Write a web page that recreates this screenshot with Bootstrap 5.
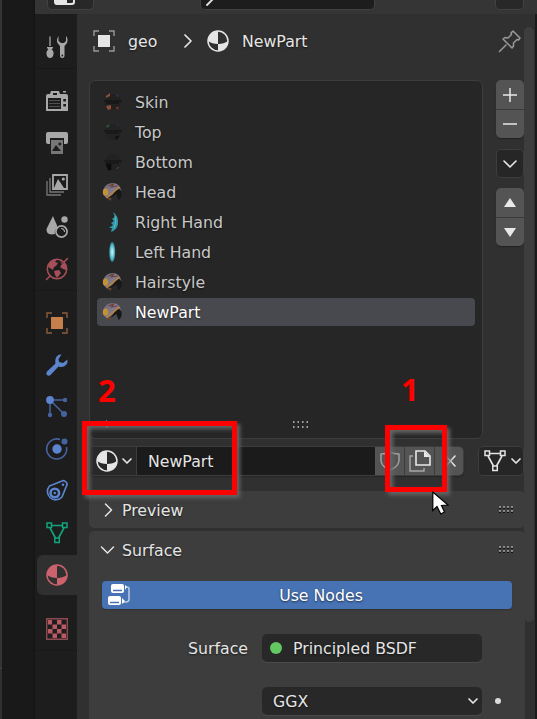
<!DOCTYPE html>
<html lang="en" data-bs-theme="dark">
<head>
<meta charset="utf-8">
<title>Material properties</title>
<link href="https://cdn.jsdelivr.net/npm/bootstrap@5.3.0/dist/css/bootstrap.min.css" rel="stylesheet">
<style>
body{font-family:"DejaVu Sans",sans-serif;font-size:15.75px;line-height:20px;color:#e5e5e5;background:#303030;width:537px;height:719px;text-shadow:0 1px 2px rgba(0,0,0,.6)}
svg{display:block;flex:none;overflow:visible}
.tx{padding-top:2px}
.ln{fill:none;stroke:currentColor;stroke-linecap:round;stroke-linejoin:round}
.edge{width:2px;background:#343434;height:669px;border-bottom:1px solid #444}
.gutter{width:33px;background:linear-gradient(90deg,#191919 30px,#151515)}
.topbar{height:14px;flex:none;background:#353535;padding-left:12px}
.topfield{height:10px;background:#282828;border:1px solid #414141;border-top:0;border-radius:0 0 5px 5px}
.tf1{width:47px}.tf2{width:175px;margin-left:106px;background:#1d1d1d}.tf3{width:29px;margin-left:120px}
.tabs{width:42px;background:#1d1d1d;padding-top:12px}
.tabset{border-bottom:1px solid #181818;margin-bottom:11px;color:#a8a8a8}
.tabset .nav-link{height:42px;padding:0 0 0 11px;color:inherit}
.tabset .nav-link.on{background:#303030;height:40px;margin:1px 0 1px 2px;padding-left:9px;border-radius:6px 0 0 6px;color:#cb626c}
.main{width:447px;padding-left:12px}
.crumb{height:54px;padding-left:4px;margin-bottom:12px}
.slots{width:394px;height:359px;background:#262626;border:1px solid #3d3d3d;border-radius:6px;padding:7px}
.slots .list-group{gap:2px}
.slots .list-group-item{height:28px;padding:0 5px;border:0;border-radius:4px;background:none;color:#c8c8c8;gap:12px}
.slots .list-group-item.on{background:#48494f;color:#fff}
.side{width:28px;gap:10px}
.sq{width:28px;height:29px;background:#545454;border:0;border-radius:0;padding:0;color:#e8e8e8;display:flex;align-items:center;justify-content:center}
.sq + .sq{border-left:1px solid #3d3d3d}
.pair{border-radius:5px;overflow:hidden;box-shadow:0 1px 1px #222}
.pair .sq + .sq{border-left:0;border-top:1px solid #3a3a3a}
.dark{background:#262626;border:1px solid #3d3d3d;border-radius:5px}
.idrow{height:30px;margin-top:7px}
.idbox{width:376px;height:30px;background:#1b1b1b;border:1px solid #3d3d3d;border-radius:5px;overflow:hidden;box-shadow:0 1px 1px #262626}
.idbox > *{flex:none}
.idtype{width:47px;background:#282828;border-right:1px solid #3d3d3d;padding-left:6px;gap:4px}
.idname{width:238px;padding-left:11px}
.idbox .sq{width:30px;height:28px}
.idbox .sq:last-child{padding-left:2px}
.linkbox{width:46px;height:30px;margin-left:14px;padding-left:5px;gap:5px}
.pane{width:436px;background:#3d3d3d;border-radius:5px}
.pane-head{height:37px;padding:0 11px 0 12px;gap:8px}
.use{height:28px;width:410px;margin:13px 0 0 13px;background:#4772b3;border-radius:4px;color:#fff;padding:0 0 0 6px;box-shadow:0 1px 1px #303030}
.prop{height:28px}
.prop .lab{width:159px}
.fld{width:220px;height:28px;margin-left:14px;background:#282828;border-radius:5px;padding:0 0 0 8px;box-shadow:0 1px 0 #4a4a4a}
.scrl{width:11px;padding-top:13px}
.thumbbar{width:10px;height:595px;background:#3d3d3d;border-radius:5px}
.rim{width:2px;background:#1b1b1b}
.mark-box{border:5px solid #f00;box-shadow:3px 3px 4px #666,inset 3px 3px 4px #666}
.m1{left:385px;top:425px;width:62px;height:67px}
.m2{left:82px;top:421px;width:155px;height:74px}
.num{font:700 31px/31px "Noto Sans",sans-serif;color:#f00;text-shadow:none}
.n1{left:401px;top:374px}.n2{left:98px;top:375px}
.ptr{left:432px;top:491px}
</style>
<script src="https://cdn.jsdelivr.net/npm/bootstrap@5.3.0/dist/js/bootstrap.bundle.min.js"></script>
</head>
<body class="position-relative overflow-hidden d-flex">
<svg width="0" height="0" class="position-absolute"><defs>
<linearGradient id="hg" x1="0" y1="0" x2="1" y2="1"><stop offset="0" stop-color="#686779"/><stop offset=".5" stop-color="#817c8c"/><stop offset="1" stop-color="#55414b"/></linearGradient>
<radialGradient id="lg"><stop offset="0" stop-color="#d4f6f9"/><stop offset=".5" stop-color="#7ccbd8"/><stop offset="1" stop-color="#258798"/></radialGradient>
<symbol id="ball" viewBox="0 0 22 22"><circle cx="11" cy="11" r="10" fill="none" stroke="currentColor" stroke-width="1.5"/><path d="M11 1A10 10 0 0 0 1 11Q5 14 11 14ZM11 14Q17 14 21 11A10 10 0 0 1 11 21Z" fill="currentColor"/></symbol>
<symbol id="helm" viewBox="0 0 20 20"><path d="M1 7Q4 0 12 1Q18 3 19 9L17 9L4 16L1 13Z" fill="url(#hg)"/><path d="M6 4L11 2L9 5L15 4" stroke="#743c38" stroke-width="1.200" fill="none"/><path d="M12 10Q17 4 19 10Q20 15 16 18L14 12L8 16Z" fill="#171717"/><path d="M4 16L17 5" stroke="#c18432" stroke-width="1.500"/><ellipse cx="3" cy="10" rx="2.7" ry="3.6" fill="#c39234"/><path d="M4 16L8 19L9 16" fill="#694630"/></symbol>
<symbol id="grip" viewBox="0 0 15 7"><path d="M0 1h2m2 0h2m2 0h2m2 0h2M0 5h2m2 0h2m2 0h2m2 0h2" stroke="#111" stroke-width="2" transform="translate(0 1)"/><path d="M0 1h2m2 0h2m2 0h2m2 0h2M0 5h2m2 0h2m2 0h2m2 0h2" stroke="#a8a8a8" stroke-width="1.500"/></symbol>
<symbol id="tri" viewBox="0 0 22 22"><path d="M5 3.5H17M4 6L9.5 16M18 6L12.5 16" fill="none" stroke="currentColor" stroke-width="1.6"/><path d="M1 1h4.5v4.5H1zM16.5 1H21v4.500h-4.500zM8.800 16h4.500v4.500H8.800z" fill="none" stroke="currentColor" stroke-width="1.500"/></symbol>
</defs></svg>

<div class="edge"></div>
<div class="gutter"></div>
<div class="flex-grow-1 d-flex flex-column">
 <header class="topbar d-flex">
  <div class="topfield tf1" style="padding-left:7px"><svg width="19" height="5" viewBox="0 0 19 5"><path d="M0-2V2Q0 5 3 5H18Q21 5 21 2V-2H19V2Q19 3 17 3H13V-2Z" fill="#e6e6e6" transform="translate(-1 0)"/></svg></div>
  <div class="topfield tf2"><svg width="14" height="6" viewBox="0 0 14 6"><path class="ln" d="M6 5L12-1" stroke-width="1.800"/></svg></div>
  <div class="topfield tf3"></div>
 </header>
 <div class="d-flex flex-grow-1">
  <nav class="tabs">
   <div class="tabset nav flex-column">
    <a class="nav-link d-flex align-items-center"><svg width="22" height="22" viewBox="0 0 22 22"><path d="M4 0.500V10" stroke="currentColor" stroke-width="1.300"/><path d="M1 11H7V12L5.500 13.500Q8 15 7.500 18Q7 22 4 22Q1 22 .5 18Q0 15 2.500 13.500L1 12Z" fill="currentColor"/><path d="M12.500 0Q10 4 11.500 7L14 10V20Q14 22 16.200 22Q18.500 22 18.500 20V10L21 7Q22.500 3 20 0V5L18 7H15L12.500 5Z" fill="currentColor"/><circle cx="16.300" cy="19.500" r=".9" fill="#1d1d1d"/></svg></a>
   </div>
   <div class="tabset nav flex-column">
    <a class="nav-link d-flex align-items-center"><svg width="22" height="22" viewBox="0 0 22 22"><path d="M0 6Q0 4 2 4H4L5 1H13L14 4H20Q22 4 22 6V21H0ZM17 1H20V2.500H17Z" fill="currentColor"/><path d="M7 3H11V5H7ZM2 8H15V19H2ZM17.300 9H20V11.500H17.300ZM17.300 14H20V16.500H17.300Z" fill="#1d1d1d"/><path d="M3 10.500H14M3 13.500H14M3 16.500H14" stroke="#505050" stroke-width="1"/></svg></a>
    <a class="nav-link d-flex align-items-center"><svg width="22" height="22" viewBox="0 0 22 22"><path d="M2 0H20Q22 0 22 2V10Q22 12 20 12H18V6H4V12H2Q0 12 0 10V2Q0 0 2 0Z" fill="currentColor"/><path d="M5 8H17V22H5Z" fill="#777"/><path d="M6 19L10 13L15 19Z" fill="#1d1d1d"/><circle cx="13.800" cy="12" r="1.500" fill="#1d1d1d"/></svg></a>
    <a class="nav-link d-flex align-items-center"><svg width="22" height="22" viewBox="0 0 22 22"><path d="M7 1H21V15H7Z" fill="none" stroke="currentColor" stroke-width="1.800"/><path d="M8 14L12 5L18 14Z" fill="currentColor"/><circle cx="17.300" cy="5" r="1.600" fill="currentColor"/><path d="M4 4V18H18M1 7V21H15" fill="none" stroke="#777" stroke-width="1.300"/></svg></a>
    <a class="nav-link d-flex align-items-center"><svg width="22" height="22" viewBox="0 0 22 22"><path d="M7 0C9 6 12 9 11 12Q8 14 9 18Q0 20 .5 13Q3 8 7 0Z" fill="currentColor"/><circle cx="18.500" cy="3.500" r="3.200" fill="currentColor"/><circle cx="15.500" cy="15.500" r="5.600" fill="none" stroke="currentColor" stroke-width="1.700"/><path d="M15.500 12.500Q18 12.500 18.500 15.500" class="ln" stroke-width="1.200"/></svg></a>
    <a class="nav-link d-flex align-items-center" style="color:#a74f59"><svg width="22" height="22" viewBox="0 0 22 22"><circle cx="11" cy="11" r="9.700" fill="none" stroke="currentColor" stroke-width="1.500"/><path d="M3 6Q6 1 11 1.500L9 4L12 5L10 8L8 9L7 12L4 10L2 9ZM14 3L20 7L20 12L17 11L14 9L16 6ZM8 13L13 12L15 15L11 20L9 17Z" fill="currentColor"/><path d="M18 4L21.500.5M.5 21.500L4 18" class="ln" stroke-width="1.500"/></svg></a>
   </div>
   <div class="tabset nav flex-column border-0" style="margin-bottom:12px">
    <a class="nav-link d-flex align-items-center"><svg width="22" height="22" viewBox="0 0 22 22"><path d="M5 5H17V17H5Z" fill="#c77f4b"/><path d="M1 6V1H6M16 1H21V6M21 16V21H16M6 21H1V16" fill="none" stroke="#8a5d3c" stroke-width="1.400"/></svg></a>
    <a class="nav-link d-flex align-items-center"><svg width="22" height="22" viewBox="0 0 22 22"><path d="M15.500.5Q11 0 9.500 5Q9 8 9.500 9.500L1 17.500Q-.5 19.500 1 21Q2.500 22.500 4.500 21L12.500 12.500Q17 14 20 11Q22 9 21.500 5.500L17 9L13 8L12.500 5Z" fill="#5b85cf"/></svg></a>
    <a class="nav-link d-flex align-items-center"><svg width="22" height="22" viewBox="0 0 22 22"><path d="M4 4H19M4 4V19M4 4L18 18" stroke="#46639f" stroke-width="1.500"/><g fill="#46639f"><circle cx="19" cy="4" r="2.200"/><circle cx="4" cy="19" r="2.200"/><circle cx="18" cy="18" r="3"/></g><circle cx="4" cy="4" r="3.900" fill="#5b85cf"/></svg></a>
    <a class="nav-link d-flex align-items-center"><svg width="22" height="22" viewBox="0 0 22 22"><path d="M14 1.500A10 10 0 1 0 20.500 9" fill="none" stroke="#46639f" stroke-width="1.600"/><circle cx="18.500" cy="3.500" r="3" fill="#46639f"/><circle cx="11" cy="11" r="4.700" fill="#5b85cf"/></svg></a>
    <a class="nav-link d-flex align-items-center" style="color:#5b85cf"><svg width="22" height="22" viewBox="0 0 22 22"><path d="M3.500 6L16 1Q18 0 20 2Q22 4 20.500 6L16 17A8.200 8.200 0 1 1 3.500 6Z" fill="none" stroke="currentColor" stroke-width="1.600"/><circle cx="8.800" cy="13" r="4.300" fill="none" stroke="currentColor" stroke-width="2.500"/><circle cx="8.800" cy="13" r="1.300" fill="currentColor"/><circle cx="17" cy="4.800" r="1.300" fill="currentColor"/></svg></a>
    <a class="nav-link d-flex align-items-center" style="color:#10a57c"><svg width="22" height="22"><use href="#tri"/></svg></a>
    <a class="nav-link on d-flex align-items-center"><svg width="22" height="22"><use href="#ball"/></svg></a>
   </div>
   <div class="tabset nav flex-column">
    <a class="nav-link d-flex align-items-center"><svg width="22" height="22" viewBox="0 0 22 22"><path d="M.7.7H21.300V21.300H.7Z" fill="#1d1d1d" stroke="#904a52" stroke-width="1.400"/><path d="M2 2H6V6.500H2ZM11 2H15.500V6.500H11ZM6.500 6.500H11V11H6.500ZM15.500 6.500H20V11H15.500ZM2 11H6.500V15.500H2ZM11 11H15.500V15.500H11ZM6.500 15.500H11V20H6.500ZM15.500 15.500H20V20H15.500Z" fill="#b95964"/></svg></a>
   </div>
  </nav>
  <main class="main">
   <div class="crumb d-flex align-items-center">
    <svg width="22" height="22" viewBox="0 0 22 22"><path d="M5 5H17V17H5Z" fill="#e6e6e6"/><path d="M1 6V1H6M16 1H21V6M21 16V21H16M6 21H1V16" fill="none" stroke="#999" stroke-width="1.400"/></svg>
    <span class="tx" style="margin-left:13px;width:56px">geo</span>
    <svg width="8" height="14" viewBox="0 0 8 14"><path class="ln" d="M1 1L7 7L1 13" stroke-width="1.700"/></svg>
    <svg width="22" height="22" style="margin-left:15px"><use href="#ball"/></svg>
    <span class="tx" style="margin-left:13px">NewPart</span>
    <svg class="ms-auto" width="22" height="22" viewBox="0 0 22 22" style="color:#999;margin-right:3px"><path class="ln" d="M14 1L21 8L19.500 10L18 9.500L14.500 13V16L13 18L4 9L6 7.500L9 8L12.500 4.500L12 3ZM7 15L.5 21.500" stroke-width="1.500"/></svg>
   </div>
   <div class="d-flex">
    <div class="slots d-flex flex-column">
     <div class="list-group">
      <div class="list-group-item d-flex align-items-center"><svg width="21" height="20" viewBox="0 0 21 20"><circle cx="11" cy="10" r="8" fill="#232020"/><path d="M4 4L8 1V4L4 6ZM4 14L9 13V17L6 18Z" fill="#8d503a"/><path d="M14 2L17 4L15 5Z" fill="#3d3276"/><path d="M14 15H17L15 18Z" fill="#773b2c"/><path d="M2 9H20M4 11H17" stroke="#111"/></svg><span class="tx">Skin</span></div>
      <div class="list-group-item d-flex align-items-center"><svg width="21" height="20" viewBox="0 0 21 20"><circle cx="11" cy="10" r="8" fill="#222"/><path d="M4 4L8 2L6 6Z" fill="#2c5a39"/><path d="M14 2L17 4L15 5Z" fill="#292c54"/><path d="M2 9H20M4 11H17M13 15L17 14L14 18" stroke="#111" fill="#111"/></svg><span class="tx">Top</span></div>
      <div class="list-group-item d-flex align-items-center"><svg width="21" height="20" viewBox="0 0 21 20"><circle cx="11" cy="10" r="8" fill="#222"/><path d="M2 9H20M4 11H17M4 12H9V18H6Z" stroke="#111" fill="#0c0c0c"/><path d="M14 17L17 15" stroke="#444"/></svg><span class="tx">Bottom</span></div>
      <div class="list-group-item d-flex align-items-center"><svg width="21" height="20"><use href="#helm"/></svg><span class="tx">Head</span></div>
      <div class="list-group-item d-flex align-items-center"><svg width="21" height="20" viewBox="0 0 21 20"><path d="M11 0Q17 4 16 12Q15 18 9 20L10 16L7 16L11 13L9 11L12 9L10 7L13 5Z" fill="#2c98a9"/><path d="M13 4Q15 10 12 16" stroke="#65bac5" fill="none"/></svg><span class="tx">Right Hand</span></div>
      <div class="list-group-item d-flex align-items-center"><svg width="21" height="20" viewBox="0 0 21 20"><ellipse cx="10.200" cy="10" rx="3" ry="10" fill="url(#lg)"/></svg><span class="tx">Left Hand</span></div>
      <div class="list-group-item d-flex align-items-center"><svg width="21" height="20"><use href="#helm"/></svg><span class="tx">Hairstyle</span></div>
      <div class="list-group-item on d-flex align-items-center"><svg width="21" height="20"><use href="#helm"/></svg><span class="tx">NewPart</span></div>
     </div>
     <div class="mt-auto d-flex align-items-center" style="padding:0 0 3px 9px">
      <svg width="5" height="8" viewBox="0 0 5 8"><path d="M0 0L5 4L0 8Z" fill="#aaa"/></svg>
      <svg width="16" height="7" viewBox="0 0 16 7" style="margin-left:182px"><path d="M0 1h1.500m3 0h1.500m3 0h1.500m3 0h1.500M0 6h1.500m3 0h1.500m3 0h1.500m3 0h1.500" stroke="#ccc" stroke-width="1.500"/></svg>
     </div>
    </div>
    <div class="side d-flex flex-column ms-auto">
     <div class="pair" style="margin-bottom:1px"><button class="sq"><svg width="14" height="14" viewBox="0 0 14 14"><path d="M0 7H14M7 0V14" stroke="currentColor" stroke-width="1.500"/></svg></button><button class="sq"><svg width="14" height="14" viewBox="0 0 14 14"><path d="M0 7H14" stroke="currentColor" stroke-width="1.500"/></svg></button></div>
     <button class="sq dark"><svg width="14" height="8" viewBox="0 0 14 8"><path class="ln" d="M1 1L7 7L13 1" stroke-width="1.600"/></svg></button>
     <div class="pair"><button class="sq"><svg width="12" height="9" viewBox="0 0 12 9"><path d="M6 0L12 9H0Z" fill="currentColor"/></svg></button><button class="sq"><svg width="12" height="9" viewBox="0 0 12 9"><path d="M6 9L12 0H0Z" fill="currentColor"/></svg></button></div>
    </div>
   </div>
   <div class="idrow d-flex">
    <div class="idbox d-flex">
     <div class="idtype d-flex align-items-center"><svg width="22" height="22"><use href="#ball"/></svg><svg width="10" height="6" viewBox="0 0 10 6"><path class="ln" d="M1 1L5 5L9 1" stroke-width="1.700"/></svg></div>
     <div class="idname d-flex align-items-center"><span class="tx">NewPart</span></div>
     <button class="sq" style="width:29px"><svg width="20" height="20" viewBox="0 0 20 20" style="color:#a2a2a2"><path class="ln" d="M1 3Q6 3 10 1Q14 3 19 3V10Q18 16 10 19Q2 16 1 10Z" stroke-width="1.500"/></svg></button>
     <button class="sq"><svg width="22" height="22" viewBox="0 0 22 22"><path d="M4 6H1V21H15V18" fill="none" stroke="#a8a8a8" stroke-width="1.400"/><path d="M7 1H16L21 6V15H7Z" fill="none" stroke="currentColor" stroke-width="1.600"/><path d="M15 1V7H21Z" fill="currentColor"/></svg></button>
     <button class="sq"><svg width="11" height="12" viewBox="0 0 11 12"><path class="ln" d="M1 1L10 11M10 1L1 11" stroke-width="1.600"/></svg></button>
    </div>
    <div class="linkbox dark d-flex align-items-center"><svg width="22" height="22"><use href="#tri"/></svg><svg width="10" height="6" viewBox="0 0 10 6"><path class="ln" d="M1 1L5 5L9 1" stroke-width="1.700"/></svg></div>
   </div>
   <section class="pane" style="margin-top:15px"><div class="pane-head d-flex align-items-center" style="padding-left:15px;gap:9px"><svg width="9" height="14" viewBox="0 0 9 14"><path class="ln" d="M1.500 1L7.500 7L1.500 13" stroke="#aaa" stroke-width="1.500"/></svg><span class="tx">Preview</span><svg class="ms-auto" width="15" height="7"><use href="#grip"/></svg></div></section>
   <section class="pane" style="margin-top:3px;height:188px;border-radius:5px 5px 0 0">
    <div class="pane-head d-flex align-items-center"><svg width="13" height="8" viewBox="0 0 13 8"><path class="ln" d="M.5 1L6.500 7L12.500 1" stroke="#aaa" stroke-width="1.500"/></svg><span class="tx">Surface</span><svg class="ms-auto" width="15" height="7"><use href="#grip"/></svg></div>
    <div class="use d-flex align-items-center"><svg width="22" height="22" viewBox="0 0 22 22"><rect x="3" y="0" width="13" height="9" rx="2" fill="#fff"/><rect x="0" y="12" width="13" height="9" rx="2" fill="#fff"/><path d="M5 6.500H14M2 18.500H11" stroke="#4772b3" stroke-width="1.500"/><path d="M17 3H19Q21 3 21 5V15Q21 18 18 18H14" fill="none" stroke="#b9cbe6" stroke-width="1.500"/><path d="M17 1L19 3L17 6ZM14 14L17 17L14 20Z" fill="#fff"/></svg><span class="tx flex-grow-1 text-center">Use Nodes</span></div>
    <div class="prop d-flex align-items-center" style="margin-top:25px"><span class="tx lab text-end">Surface</span><div class="fld d-flex align-items-center"><svg width="12" height="12"><circle cx="6" cy="6" r="6" fill="#63c763"/></svg><span class="tx" style="margin-left:11px">Principled BSDF</span></div></div>
    <div class="prop d-flex align-items-center" style="margin-top:25px"><span class="lab"></span><div class="fld d-flex align-items-center" style="padding:0 4px 0 11px"><span class="tx">GGX</span><svg class="ms-auto" width="10" height="6" viewBox="0 0 10 6"><path class="ln" d="M1 1L5 5L9 1" stroke-width="1.700"/></svg></div><svg width="6" height="6" style="margin-left:13px"><circle cx="3" cy="3" r="3" fill="#ddd"/></svg></div>
   </section>
  </main>
  <div class="scrl"><div class="thumbbar"></div></div>
  <div class="rim"></div>
 </div>
</div>
<div class="mark-box m2 position-absolute"></div>
<div class="mark-box m1 position-absolute"></div>
<div class="num n2 position-absolute">2</div>
<div class="num n1 position-absolute">1</div>
<svg class="ptr position-absolute" width="18" height="24" viewBox="0 0 18 24"><path d="M.8 1V19.500L5 15.500L8.800 23L12.500 21L9.500 14.500L16 14Z" fill="#fff" stroke="#000" stroke-width="1.200"/></svg>
</body>
</html>
